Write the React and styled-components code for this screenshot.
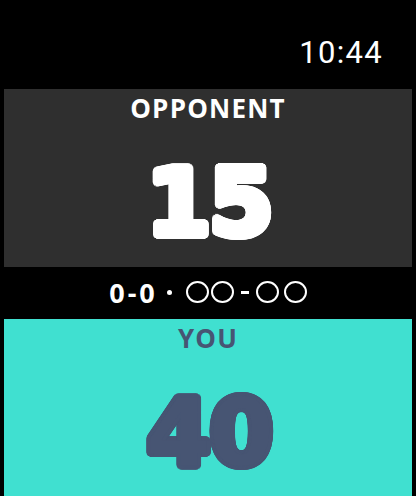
import styled, { createGlobalStyle } from "styled-components";

const GlobalStyle = createGlobalStyle`
  html, body {
    margin: 0;
    padding: 0;
    background: #000;
  }
  * {
    box-sizing: border-box;
  }
`;

// ring of hard shadows around the glyphs, gives the numbers round fat corners
const roundBold = (r, steps = 24) =>
  Array.from({ length: steps }, (_, i) => {
    const a = (i / steps) * Math.PI * 2;
    return `${(Math.cos(a) * r).toFixed(2)}px ${(Math.sin(a) * r).toFixed(2)}px 0 currentColor`;
  }).join(", ");

const Screen = styled.div`
  width: 416px;
  height: 496px;
  background: #000;
  display: flex;
  flex-direction: column;
  overflow: hidden;
  font-family: "Open Sans", "Liberation Sans", sans-serif;
`;

const StatusBar = styled.div`
  height: 89px;
  display: flex;
  justify-content: flex-end;
  align-items: flex-start;
  padding: 37px 33px 0 0;
`;

const Clock = styled.span`
  color: #fff;
  font-family: Roboto, "Liberation Sans", sans-serif;
  font-size: 31px;
  line-height: 1;
  letter-spacing: 1.3px;
`;

const Panel = styled.section`
  margin: 0 4px;
  height: ${({ $height }) => $height};
  flex: ${({ $grow }) => ($grow ? 1 : "none")};
  background: ${({ $bg }) => $bg};
  color: ${({ $fg }) => $fg};
  display: flex;
  flex-direction: column;
  align-items: center;
  padding-top: ${({ $top }) => $top}px;
`;

const Label = styled.div`
  font-size: 26px;
  font-weight: 700;
  line-height: 1;
  letter-spacing: 1.2px;
`;

const Points = styled.div`
  margin-top: ${({ $gap }) => $gap}px;
  font-family: "DejaVu Sans", Roboto, sans-serif;
  font-size: 93px;
  font-weight: 700;
  line-height: 1.1;
  letter-spacing: -2px;
  margin-right: -2px;
  text-shadow: ${roundBold(4)}, ${roundBold(2, 12)};
`;

const ScoreLine = styled.div`
  height: 52px;
  display: flex;
  align-items: center;
  justify-content: center;
  color: #fff;
  padding-bottom: 2px;
`;

const Games = styled.span`
  font-size: 27px;
  font-weight: 700;
  line-height: 1;
  letter-spacing: 3px;
  margin-right: -3px;
`;

const Dot = styled.span`
  width: 5px;
  height: 5px;
  border-radius: 50%;
  background: #fff;
  margin: 0 14px 0 12px;
`;

const Ring = styled.span`
  width: 23px;
  height: 22px;
  border: 2.6px solid #fff;
  border-radius: 50%;
  margin-right: ${({ $mr }) => $mr || 0}px;
`;

const Dash = styled.span`
  width: 8px;
  height: 3px;
  background: #fff;
  margin: 0 7px;
`;

export default function App() {
  return (
    <>
      <GlobalStyle />
      <Screen>
        <StatusBar>
          <Clock>10:44</Clock>
        </StatusBar>
        <Panel $bg="#2f2f2f" $fg="#fff" $height="178px" $top={6}>
          <Label>OPPONENT</Label>
          <Points $gap={31}>15</Points>
        </Panel>
        <ScoreLine>
          <Games>0-0</Games>
          <Dot />
          <Ring $mr={2} />
          <Ring />
          <Dash />
          <Ring $mr={5} />
          <Ring />
        </ScoreLine>
        <Panel $bg="#40e0d0" $fg="#475573" $grow $top={6}>
          <Label>YOU</Label>
          <Points $gap={31}>40</Points>
        </Panel>
      </Screen>
    </>
  );
}
